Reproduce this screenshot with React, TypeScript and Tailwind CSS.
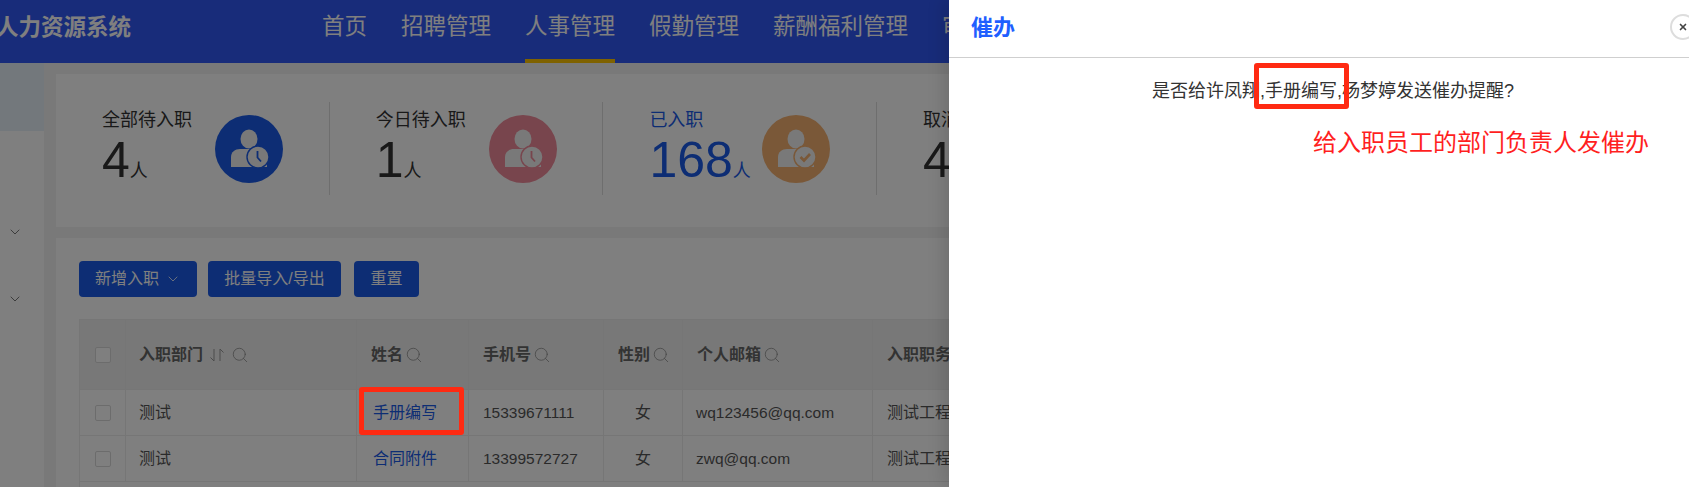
import { ChevronDown, Search, X } from 'lucide-react';

const FONT = 'font-["Liberation_Sans","Noto_Sans_CJK_SC",sans-serif]';

const NAV_ITEMS = ['首页', '招聘管理', '人事管理', '假勤管理', '薪酬福利管理', '审批管理'];

type Stat = {
  label: string;
  value: string;
  badge: string;
  tint: string;
  mark: 'clock' | 'check';
  active?: boolean;
};

const STATS: Stat[] = [
  { label: '全部待入职', value: '4', badge: 'bg-[#1a5be8]', tint: '#1a5be8', mark: 'clock' },
  { label: '今日待入职', value: '1', badge: 'bg-[#f08a9a]', tint: '#f08a9a', mark: 'clock' },
  { label: '已入职', value: '168', badge: 'bg-[#f4b070]', tint: '#f4b070', mark: 'check', active: true },
  { label: '取消入职', value: '4', badge: 'bg-[#1a5be8]', tint: '#1a5be8', mark: 'clock' },
];

const ROWS = [
  { dept: '测试', name: '手册编写', phone: '15339671111', gender: '女', mail: 'wq123456@qq.com', job: '测试工程师' },
  { dept: '测试', name: '合同附件', phone: '13399572727', gender: '女', mail: 'zwq@qq.com', job: '测试工程师' },
];

function PersonBadge({ mark, tint, className }: { mark: Stat['mark']; tint: string; className: string }) {
  return (
    <div className={`flex h-[68px] w-[68px] shrink-0 items-center justify-center rounded-full ${className}`}>
      <svg width="68" height="68" viewBox="0 0 68 68" className="text-[#f2f2f2]">
        <ellipse cx="34" cy="24" rx="8.5" ry="9.5" fill="currentColor" />
        <path d="M16 52V42c0-5 4-8 9-8h18c5 0 9 3 9 8v10z" fill="currentColor" />
        <circle cx="43" cy="42" r="11" fill="currentColor" stroke={tint} strokeWidth="1.4" />
        <circle cx="43" cy="42" r="8.5" fill="currentColor" />
        {mark === 'clock' ? (
          <path d="M42.5 36v6.5l3.5 4" fill="none" stroke={tint} strokeWidth="1.8" />
        ) : (
          <path d="M38.5 42l3.5 3.5 6-6.5" fill="none" stroke={tint} strokeWidth="2.6" />
        )}
      </svg>
    </div>
  );
}

function StatItem({ stat }: { stat: Stat }) {
  return (
    <div className="flex h-[93px] w-[273.7px] shrink-0 items-center border-r border-[#dcdcdc] pl-[46px]">
      <div className="w-[113px] shrink-0 pt-[7px]">
        <p className={`text-[18px] leading-[22px] ${stat.active ? 'text-[#1a5be8]' : 'text-[#333]'}`}>{stat.label}</p>
        <p className={`mt-[4px] flex items-baseline leading-[50px] ${stat.active ? 'text-[#1a5be8]' : 'text-[#333]'}`}>
          <span className="text-[50px]">{stat.value}</span>
          <span className="text-[18px]">人</span>
        </p>
      </div>
      <PersonBadge mark={stat.mark} tint={stat.tint} className={stat.badge} />
    </div>
  );
}

function Checkbox() {
  return <span className="ml-[15px] block h-[16px] w-[16px] rounded-[2px] border border-[#d9d9d9] bg-white" />;
}

function SortIcon() {
  return (
    <svg width="18" height="16" viewBox="0 0 18 16" fill="none" stroke="#999" strokeWidth="1" className="ml-[5px] mr-[3px]">
      <path d="M6 2v12L2.5 10.5" />
      <path d="M12 14V2l3.5 3.5" />
    </svg>
  );
}

function HeaderCell({ title, sort, className = '' }: { title: string; sort?: boolean; className?: string }) {
  return (
    <th className={`border border-[#ececec] bg-[#f1f1f1] px-[14px] text-left font-bold ${className}`}>
      <div className="flex items-center text-[16px] text-[#666]">
        <span className="whitespace-nowrap">{title}</span>
        {sort && <SortIcon />}
        <Search size={18} strokeWidth={1} className="ml-[2px] shrink-0 text-[#888]" />
      </div>
    </th>
  );
}

export default function App() {
  return (
    <div className={`relative h-[487px] w-[1689px] overflow-hidden bg-[#f3f3f3] ${FONT}`}>
      {/* Top bar */}
      <header className="flex h-[63px] items-stretch bg-[#3058f4]">
        <div className="-ml-[4px] w-[326px] shrink-0 whitespace-nowrap text-[22.5px] font-bold leading-[56px] text-white">
          人力资源系统
        </div>
        <nav className="flex gap-[34px] whitespace-nowrap">
          {NAV_ITEMS.map((item) => (
            <span
              key={item}
              className={`text-[22.5px] leading-[54px] text-white ${
                item === '人事管理' ? 'border-b-4 border-[#ffc400]' : ''
              }`}
            >
              {item}
            </span>
          ))}
        </nav>
      </header>

      <div className="flex">
        {/* Sidebar */}
        <aside className="h-[424px] w-[44px] shrink-0 bg-white">
          <div className="h-[68px] bg-[#e6f0f8]" />
          <ChevronDown size={16} strokeWidth={1} className="ml-[7px] mt-[93px] text-[#333]" />
          <ChevronDown size={16} strokeWidth={1} className="ml-[7px] mt-[51px] text-[#333]" />
        </aside>

        {/* Content */}
        <main className="ml-[12px] min-w-0 flex-1 pt-[11px]">
          <section className="flex h-[153px] items-center bg-white pb-[4px]">
            {STATS.map((stat) => (
              <StatItem key={stat.label} stat={stat} />
            ))}
          </section>

          <section className="mt-[11px] h-[300px] bg-white pl-[23px] pt-[23px]">
            <div className="flex gap-[11px] text-[16px] text-white">
              <button className="flex h-[36px] w-[118px] items-center justify-center gap-[6px] rounded-[4px] bg-[#1a5be8]">
                新增入职
                <ChevronDown size={16} strokeWidth={1.2} />
              </button>
              <button className="h-[36px] w-[133px] rounded-[4px] bg-[#1a5be8]">批量导入/导出</button>
              <button className="ml-[2px] h-[36px] w-[65px] rounded-[4px] bg-[#1a5be8]">重置</button>
            </div>

            <table className="mt-[22px] w-[1610px] table-fixed border-collapse">
              <colgroup>
                <col className="w-[46px]" />
                <col className="w-[231px]" />
                <col className="w-[112px]" />
                <col className="w-[135px]" />
                <col className="w-[79px]" />
                <col className="w-[190px]" />
                <col />
              </colgroup>
              <thead>
                <tr className="h-[70px]">
                  <th className="border border-[#ececec] bg-[#f1f1f1] p-0">
                    <Checkbox />
                  </th>
                  <HeaderCell title="入职部门" sort className="!pl-[13px]" />
                  <HeaderCell title="姓名" />
                  <HeaderCell title="手机号" />
                  <HeaderCell title="性别" />
                  <HeaderCell title="个人邮箱" />
                  <HeaderCell title="入职职务" />
                </tr>
              </thead>
              <tbody className="text-[15.5px] text-[#555]">
                {ROWS.map((row) => (
                  <tr key={row.name} className="h-[46px]">
                    <td className="border border-[#ececec] p-0">
                      <Checkbox />
                    </td>
                    <td className="border border-[#ececec] px-[13px] text-[16px]">{row.dept}</td>
                    <td className="border border-[#ececec] px-[16px] text-[16px] text-[#1a5be8]">{row.name}</td>
                    <td className="border border-[#ececec] px-[14px]">{row.phone}</td>
                    <td className="border border-[#ececec] text-center text-[16px]">{row.gender}</td>
                    <td className="border border-[#ececec] px-[13px]">{row.mail}</td>
                    <td className="border border-[#ececec] px-[14px] text-[16px]">{row.job}</td>
                  </tr>
                ))}
                <tr className="h-[46px]">
                  <td className="border border-[#ececec]" colSpan={7} />
                </tr>
              </tbody>
            </table>
          </section>
        </main>
      </div>

      {/* Mask */}
      <div className="absolute inset-0 bg-black/50" />

      {/* Drawer */}
      <aside className="absolute bottom-0 right-0 top-0 w-[740px] bg-white shadow-[-6px_0_16px_rgba(0,0,0,0.12)]">
        <div className="flex h-[58px] items-center border-b border-[#cfcfcf] pb-[3px] pl-[22px] text-[22px] font-bold text-[#1f5fff]">
          催办
        </div>
        <p className="pl-[203px] pt-[21px] text-[18px] leading-[24px] text-[#333]">
          是否给许凤翔,手册编写,杨梦婷发送催办提醒?
        </p>
        <p className="pl-[364px] pt-[24px] text-[24px] leading-[32px] text-[#ff1f1f]">给入职员工的部门负责人发催办</p>
        <button className="absolute left-[721px] top-[14px] flex h-[26px] w-[26px] items-center justify-center rounded-full border-2 border-[#ddd] bg-white">
          <X size={10} strokeWidth={4} className="text-[#444]" />
        </button>
      </aside>

      {/* Red markers */}
      <div className="absolute left-[359px] top-[387px] h-[48px] w-[105px] rounded-[3px] border-[5px] border-[#ff2a12]" />
      <div className="absolute left-[1254px] top-[63px] h-[46px] w-[95px] rounded-[3px] border-[5px] border-[#ff2a12]" />
    </div>
  );
}
